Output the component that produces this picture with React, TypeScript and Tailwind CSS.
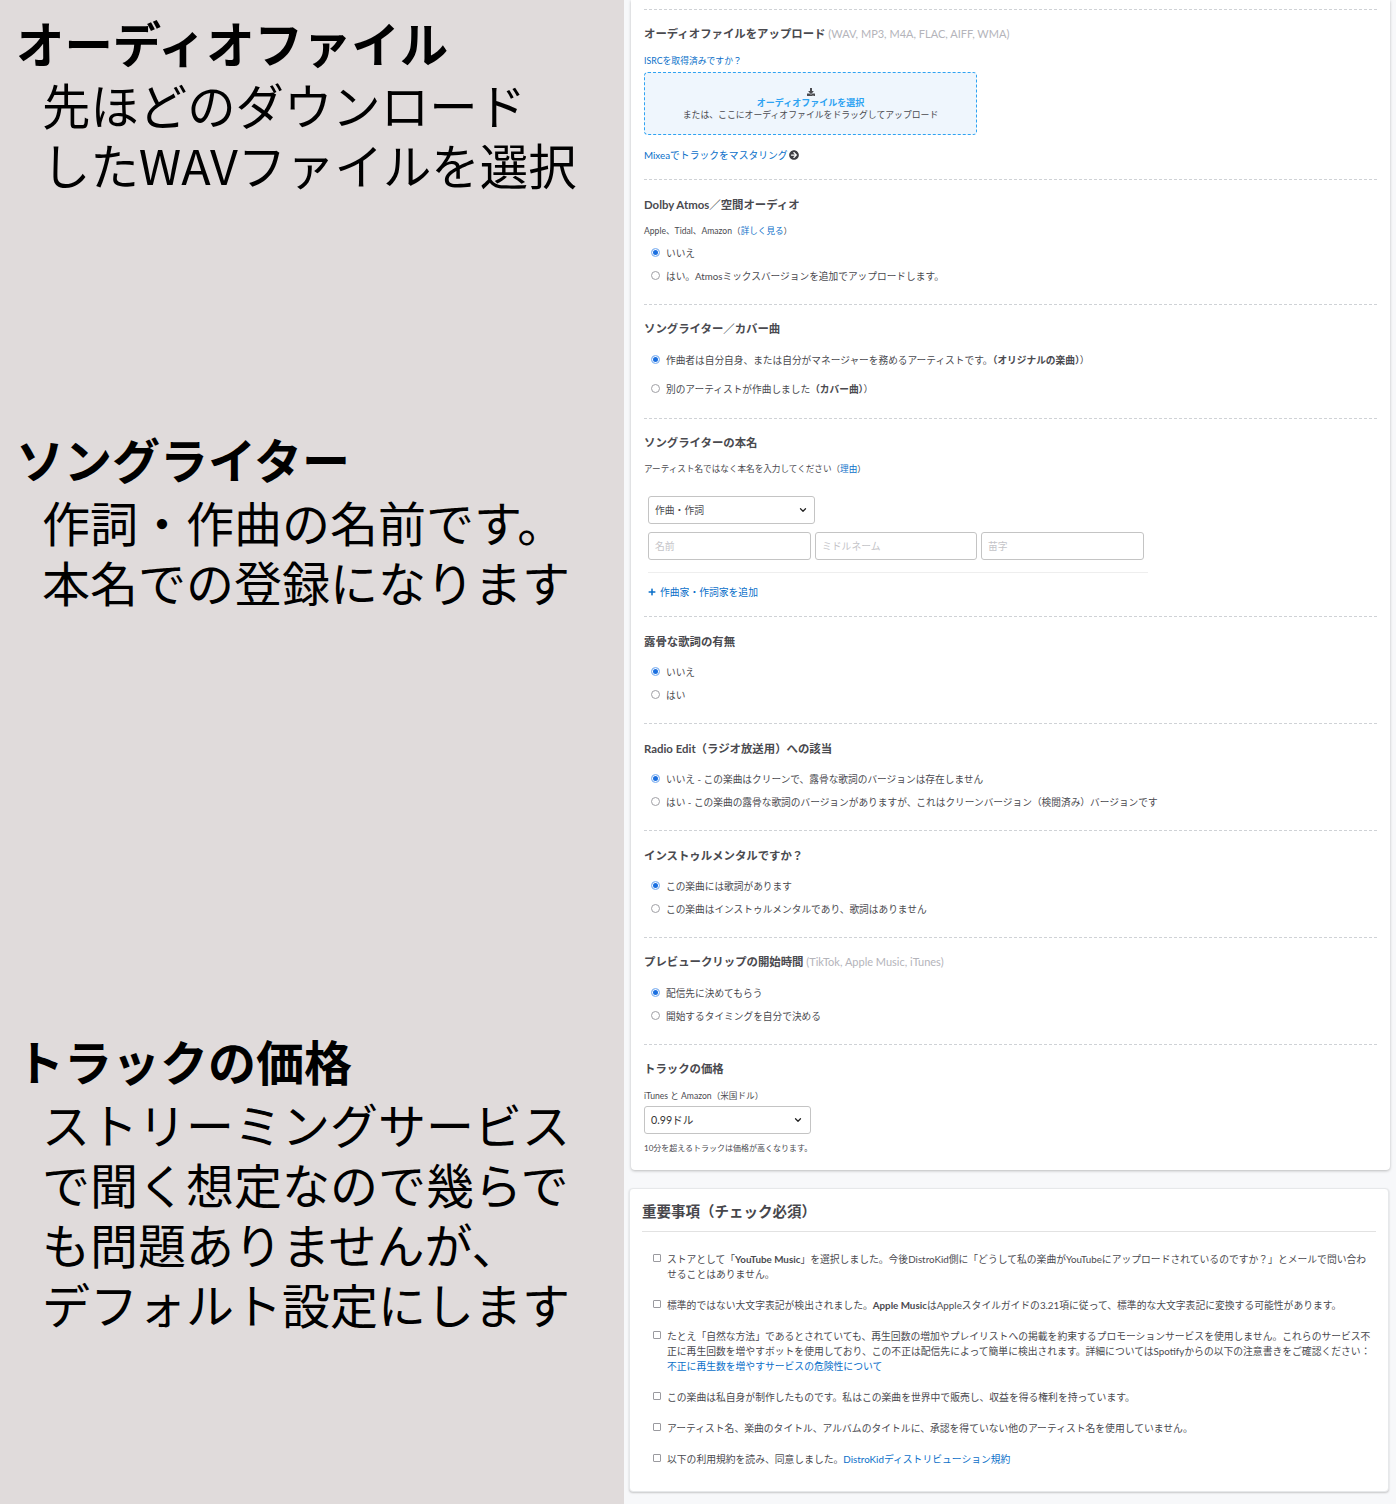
import type { ReactNode } from 'react';
import { ChevronDown } from 'lucide-react';
import { FaArrowCircleRight, FaDownload, FaPlus } from 'react-icons/fa';

const link = 'text-[#0a6fc9]';

function Section({ title, hint, nudge, children, className }: { title: string; hint?: string; nudge?: boolean; children: ReactNode; className: string }) {
  return (
    <section className={`border-t border-dashed border-[#cfd2d6] pt-[17px] ${className}`}>
      <h3 className={`text-[11.4px] leading-[14px] font-bold text-[#4a4a4f] ${nudge ? 'mt-[1px]' : ''}`}>
        {title}
        {hint && <span className="text-[11px] font-normal text-[#b4b4ba]"> {hint}</span>}
      </h3>
      {children}
    </section>
  );
}

function Radio({ checked, children, className }: { checked?: boolean; children: ReactNode; className?: string }) {
  return (
    <div className={`flex items-center pl-[7px] h-[14px] text-[9.7px] text-[#4a4a4f] ${className ?? ''}`}>
      <span className={`w-[9px] h-[9px] rounded-full mr-[6px] shrink-0 mb-[2px] ${checked ? 'border border-[#9cc3f5] bg-[#1a6fe0] ring-1 ring-inset ring-white' : 'border border-[#a0a0a5] bg-white'}`} />
      <span className="mt-[1px]">{children}</span>
    </div>
  );
}

function Check({ children, className }: { children: ReactNode; className?: string }) {
  return (
    <div className={`flex text-[9.8px] leading-[15px] text-[#4a4a4f] ${className ?? ''}`}>
      <span className="w-[8px] h-[8px] mt-[2px] mr-[6px] shrink-0 border border-[#9a9a9f] rounded-[1px] bg-white" />
      <p>{children}</p>
    </div>
  );
}

function Field({ placeholder, width }: { placeholder: string; width: string }) {
  return (
    <div className={`${width} h-[28px] flex items-center px-[6px] border border-[#c4c4c4] rounded-[3px] text-[9.8px] text-[#c4c4c8]`}>
      {placeholder}
    </div>
  );
}

export default function App() {
  return (
    <div className="flex w-[1396px] h-[1504px] overflow-hidden bg-[#f7f8fa]" style={{ fontFamily: 'Lato, "Noto Sans CJK JP", sans-serif' }}>
      <aside className="w-[624px] shrink-0 h-full bg-[#e0dbdb] text-black text-[48px] leading-[60px]" style={{ fontFamily: '"Noto Sans CJK JP", sans-serif' }}>
        <div className="pl-[16px] pt-[12px] text-[48.4px]">
          <h2 className="font-bold">オーディオファイル</h2>
          <p className="pl-[26px] pt-[2px]">先ほどのダウンロード<br />したWAVファイルを選択</p>
        </div>
        <div className="pl-[16px] pt-[234px]">
          <h2 className="font-bold">ソングライター</h2>
          <p className="pl-[26px] pt-[3px]">作詞・作曲の名前です。<br />本名での登録になります</p>
        </div>
        <div className="pl-[16px] pt-[419px]">
          <h2 className="font-bold">トラックの価格</h2>
          <p className="pl-[26px] pt-[3px]">ストリーミングサービス<br />で聞く想定なので幾らで<br />も問題ありませんが、<br />デフォルト設定にします</p>
        </div>
      </aside>

      <main className="flex-1 min-w-0">
        <div className="ml-[7px] mr-[6px] h-[1170px] bg-white rounded-b-[4px] shadow-[0_1px_3px_rgba(0,0,0,0.25)] px-[13px] pt-[9px]">
          <Section title="オーディオファイルをアップロード" hint="(WAV, MP3, M4A, FLAC, AIFF, WMA)" className="h-[170px]">
            <a className={`block mt-[14px] text-[8.8px] leading-[12px] ${link}`}>ISRCを取得済みですか？</a>
            <div className="mt-[5px] w-[333px] h-[63px] flex flex-col items-center justify-center pt-[2px] border border-dashed border-[#2ea3f2] rounded-[4px] bg-[#eff6fd] text-[8.85px] leading-[12px] text-[#4a4a4f]">
              <FaDownload size={8} className="mb-[1px]" />
              <span className="text-[9px] font-bold text-[#2ea3f2]">オーディオファイルを選択</span>
              <span>または、ここにオーディオファイルをドラッグしてアップロード</span>
            </div>
            <a className={`flex items-center mt-[14px] text-[9.8px] leading-[12px] ${link}`}>
              Mixeaでトラックをマスタリング
              <FaArrowCircleRight size={10} className="ml-[1px] text-[#3d3d42]" />
            </a>
          </Section>

          <Section title="Dolby Atmos／空間オーディオ" nudge className="h-[125px]">
            <p className="mt-[13px] text-[8.6px] leading-[12px] text-[#4a4a4f]">Apple、Tidal、Amazon（<a className={link}>詳しく見る</a>）</p>
            <Radio checked className="mt-[9px]">いいえ</Radio>
            <Radio className="mt-[9px]">はい。Atmosミックスバージョンを追加でアップロードします。</Radio>
          </Section>

          <Section title="ソングライター／カバー曲" className="h-[114px]">
            <Radio checked className="mt-[17px]">作曲者は自分自身、または自分がマネージャーを務めるアーティストです。<b>（オリジナルの楽曲）</b>）</Radio>
            <Radio className="mt-[15px]">別のアーティストが作曲しました<b>（カバー曲）</b>）</Radio>
          </Section>

          <Section title="ソングライターの本名" className="h-[198px]">
            <p className="mt-[13px] text-[8.6px] leading-[12px] text-[#4a4a4f]">アーティスト名ではなく本名を入力してください（<a className={link}>理由</a>）</p>
            <div className="ml-[4px] mt-[21px] w-[167px] h-[28px] flex items-center justify-between px-[6px] border border-[#c4c4c4] rounded-[3px] text-[9.8px] text-[#4a4a4f]">
              作曲・作詞
              <ChevronDown size={10} strokeWidth={3} className="text-[#222]" />
            </div>
            <div className="ml-[4px] mt-[8px] w-[500px] flex gap-[4px] pb-[12px] border-b border-[#eeeeee]">
              <Field placeholder="名前" width="w-[163px]" />
              <Field placeholder="ミドルネーム" width="w-[162px]" />
              <Field placeholder="苗字" width="w-[163px]" />
            </div>
            <a className={`flex items-center ml-[4px] mt-[13px] text-[9.8px] leading-[12px] ${link}`}>
              <FaPlus size={8} className="mr-[4px]" />
              作曲家・作詞家を追加
            </a>
          </Section>

          <Section title="露骨な歌詞の有無" nudge className="h-[107px]">
            <Radio checked className="mt-[16px]">いいえ</Radio>
            <Radio className="mt-[9px]">はい</Radio>
          </Section>

          <Section title="Radio Edit（ラジオ放送用）への該当" nudge className="h-[107px]">
            <Radio checked className="mt-[16px]">いいえ - この楽曲はクリーンで、露骨な歌詞のバージョンは存在しません</Radio>
            <Radio className="mt-[9px]">はい - この楽曲の露骨な歌詞のバージョンがありますが、これはクリーンバージョン（検閲済み）バージョンです</Radio>
          </Section>

          <Section title="インストゥルメンタルですか？" nudge className="h-[107px]">
            <Radio checked className="mt-[16px]">この楽曲には歌詞があります</Radio>
            <Radio className="mt-[9px]">この楽曲はインストゥルメンタルであり、歌詞はありません</Radio>
          </Section>

          <Section title="プレビュークリップの開始時間" hint="(TikTok, Apple Music, iTunes)" className="h-[107px]">
            <Radio checked className="mt-[17px]">配信先に決めてもらう</Radio>
            <Radio className="mt-[9px]">開始するタイミングを自分で決める</Radio>
          </Section>

          <Section title="トラックの価格" className="">
            <p className="mt-[14px] text-[8.6px] leading-[12px] text-[#4a4a4f]">iTunes と Amazon（米国ドル）</p>
            <div className="mt-[4px] w-[167px] h-[28px] flex items-center justify-between px-[6px] border border-[#c4c4c4] rounded-[3px] text-[10.7px] text-[#333]">
              0.99ドル
              <ChevronDown size={10} strokeWidth={3} className="mr-[1px] text-[#222]" />
            </div>
            <p className="mt-[8px] text-[8px] leading-[12px] text-[#4a4a4f]">10分を超えるトラックは価格が高くなります。</p>
          </Section>
        </div>

        <div className="ml-[5px] mr-[7px] mt-[18px] h-[304px] bg-white border border-[#e6e8ea] rounded-[4px] shadow-[0_1px_2px_rgba(0,0,0,0.2)] px-[12px]">
          <h2 className="h-[43px] pt-[3px] flex items-center border-b border-[#e2e2e2] text-[14.5px] font-bold text-[#47474c]">重要事項（チェック必須）</h2>
          <div className="pl-[11px] pt-[20px] pr-[4px]">
            <Check>ストアとして「<b>YouTube Music</b>」を選択しました。今後DistroKid側に「どうして私の楽曲がYouTubeにアップロードされているのですか？」とメールで問い合わせることはありません。</Check>
            <Check className="mt-[16px]">標準的ではない大文字表記が検出されました。<b>Apple Music</b>はAppleスタイルガイドの3.21項に従って、標準的な大文字表記に変換する可能性があります。</Check>
            <Check className="mt-[16px]">たとえ「自然な方法」であるとされていても、再生回数の増加やプレイリストへの掲載を約束するプロモーションサービスを使用しません。これらのサービス不正に再生回数を増やすボットを使用しており、この不正は配信先によって簡単に検出されます。詳細についてはSpotifyからの以下の注意書きをご確認ください：<a className={link}>不正に再生数を増やすサービスの危険性について</a></Check>
            <Check className="mt-[16px]">この楽曲は私自身が制作したものです。私はこの楽曲を世界中で販売し、収益を得る権利を持っています。</Check>
            <Check className="mt-[16px]">アーティスト名、楽曲のタイトル、アルバムのタイトルに、承認を得ていない他のアーティスト名を使用していません。</Check>
            <Check className="mt-[16px]">以下の利用規約を読み、同意しました。<a className={link}>DistroKidディストリビューション規約</a></Check>
          </div>
        </div>
      </main>
    </div>
  );
}
